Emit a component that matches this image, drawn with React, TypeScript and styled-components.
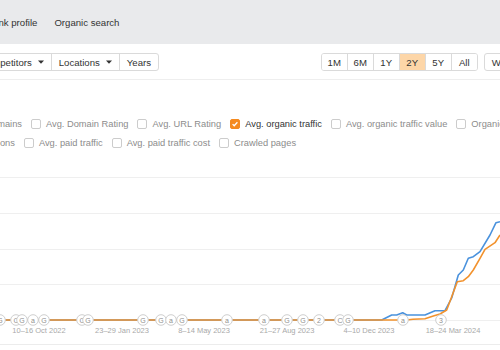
import React from 'react';
import styled, { createGlobalStyle } from 'styled-components';

const GlobalStyle = createGlobalStyle`
	body {
		margin: 0;
		background: #fff;
		font-family: 'Liberation Sans', Arial, sans-serif;
		overflow: hidden;
	}
`;

const options = [
	[
		{ label: 'Referring domains', checked: false },
		{ label: 'Avg. Domain Rating', checked: false },
		{ label: 'Avg. URL Rating', checked: false },
		{ label: 'Avg. organic traffic', checked: true },
		{ label: 'Avg. organic traffic value', checked: false },
		{ label: 'Organic pages', checked: false },
	],
	[
		{ label: 'Paid positions', checked: false },
		{ label: 'Avg. paid traffic', checked: false },
		{ label: 'Avg. paid traffic cost', checked: false },
		{ label: 'Crawled pages', checked: false },
	],
];

const ranges = ['1M', '6M', '1Y', '2Y', '5Y', 'All'];

const markers: [number, string][] = [
	[0, 'G'], [16, 'C'], [22, 'G'], [33, 'a'], [44, 'G'], [82, 'C'], [88, 'G'],
	[143, 'G'], [161, 'G'], [171, 'a'], [182, 'G'], [227, 'a'], [264, 'a'],
	[287, 'G'], [303, 'G'], [319, '2'], [340, 'C'], [348, 'G'], [403, 'a'], [441, '3'],
];

const axisLabels: [number, string][] = [
	[39, '10–16 Oct 2022'],
	[122, '23–29 Jan 2023'],
	[204, '8–14 May 2023'],
	[287, '21–27 Aug 2023'],
	[369, '4–10 Dec 2023'],
	[453, '18–24 Mar 2024'],
];

const blue = [
	[0, 160], [381.7, 160], [391.7, 155], [396.7, 155], [402.7, 152.7], [406.7, 155],
	[425, 155], [435, 150.7], [445, 150.7], [451.7, 138], [458.3, 115], [463.3, 110],
	[468.3, 98.3], [473.3, 96.7], [480, 91.7], [490, 75], [496, 62.7], [500, 61.7],
];

const orange = [
	[0, 160], [406.7, 160], [413, 159.3], [425, 158.7], [433.3, 156], [440, 154],
	[446.7, 150], [451.7, 136.7], [457.3, 121.7], [463.3, 120.7], [468.3, 116.7],
	[473.3, 110], [480, 98.3], [485, 89.3], [495, 82.7], [500, 75],
];

const toPoints = (pts: number[][]) => pts.map((p) => p.join(',')).join(' ');

function Caret() {
	return (
		<CaretIcon viewBox='0 0 6 4'>
			<path d='M0 0.5h6L3 3.7z' fill='#333' />
		</CaretIcon>
	);
}

function Chart() {
	return (
		<ChartSvg viewBox='0 0 500 190' width={500} height={190}>
			{[17, 53, 89, 124, 160].map((y) => (
				<line key={y} x1={0} x2={500} y1={y + 0.5} y2={y + 0.5} stroke='#efefef' />
			))}
			<line x1={0} x2={500} y1={184.5} y2={184.5} stroke='#ececec' />
			<polyline points={toPoints(blue)} fill='none' stroke='#4a92dd' strokeWidth={1.6} strokeLinejoin='round' />
			<polyline points={toPoints(orange)} fill='none' stroke='#f2922d' strokeWidth={1.6} strokeLinejoin='round' />
			{markers.map(([x, t], i) => (
				<g key={i}>
					<circle cx={x} cy={160} r={5.3} fill='#fff' stroke='#cfcfcf' />
					<text x={x} y={162.5} textAnchor='middle' fontSize={7} fill='#8f8f8f' fontFamily='Liberation Sans, Arial, sans-serif'>
						{t}
					</text>
				</g>
			))}
			{axisLabels.map(([x, t]) => (
				<text key={t} x={x} y={173} textAnchor='middle' fontSize={7.5} fill='#a9a9a9' fontFamily='Liberation Sans, Arial, sans-serif'>
					{t}
				</text>
			))}
		</ChartSvg>
	);
}

function App() {
	return (
		<Page>
			<GlobalStyle />
			<TopNav>
				<NavTab>Link profile</NavTab>
				<NavTab>Organic search</NavTab>
			</TopNav>
			<Toolbar>
				<ButtonGroup>
					<Button>
						Competitors <Caret />
					</Button>
					<Button>
						Locations <Caret />
					</Button>
					<Button>Years</Button>
				</ButtonGroup>
				<RangeGroup>
					{ranges.map((r) => (
						<RangeButton key={r} $active={r === '2Y'}>
							{r}
						</RangeButton>
					))}
				</RangeGroup>
				<ButtonGroup>
					<Button>
						Weekly <Caret />
					</Button>
				</ButtonGroup>
			</Toolbar>
			<Options>
				{options.map((row, i) => (
					<OptionRow key={i} $offset={i === 0 ? -69 : -58}>
						{row.map((o) => (
							<Option key={o.label}>
								<Box $checked={o.checked}>
									{o.checked && (
										<svg viewBox='0 0 10 10' width={8} height={8}>
											<path d='M2 5.2l2 2 4-4.4' fill='none' stroke='#fff' strokeWidth={1.6} />
										</svg>
									)}
								</Box>
								<OptionLabel $checked={o.checked}>{o.label}</OptionLabel>
							</Option>
						))}
					</OptionRow>
				))}
			</Options>
			<Chart />
		</Page>
	);
}

const Page = styled.div`
	width: 500px;
	height: 350px;
	overflow: hidden;
`;

const TopNav = styled.div`
	display: flex;
	align-items: center;
	gap: 17px;
	height: 44px;
	padding-top: 1px;
	box-sizing: border-box;
	margin-left: -9px;
	background: #e9eaec;
`;

const NavTab = styled.div`
	font-size: 9.6px;
	color: #333;
`;

const Toolbar = styled.div`
	display: flex;
	align-items: center;
	gap: 6px;
	margin: 9px -43px 0 -28px;
	padding-bottom: 8px;
	border-bottom: 1px solid #eeeeee;
`;

const ButtonGroup = styled.div`
	display: flex;
	height: 18px;
	box-sizing: border-box;
	border: 1px solid #dadada;
	border-radius: 3px;
	background: #fff;
`;

const Button = styled.div`
	display: flex;
	align-items: center;
	gap: 6px;
	padding: 0 7px;
	font-size: 9.6px;
	color: #333;
	& + & {
		border-left: 1px solid #dadada;
	}
`;

const CaretIcon = styled.svg`
	width: 6px;
	height: 4px;
`;

const RangeGroup = styled(ButtonGroup)`
	&& {
		margin-left: auto;
	}
	overflow: hidden;
`;

const RangeButton = styled.div<{ $active?: boolean }>`
	width: 25px;
	display: flex;
	align-items: center;
	justify-content: center;
	font-size: 9.6px;
	color: #333;
	background: ${(p) => (p.$active ? '#fdd6a8' : '#fff')};
	& + & {
		border-left: 1px solid #dadada;
	}
`;

const Options = styled.div`
	padding-top: 34px;
`;

const OptionRow = styled.div<{ $offset: number }>`
	display: flex;
	align-items: center;
	height: 19px;
	margin-left: ${(p) => p.$offset}px;
	white-space: nowrap;
`;

const Option = styled.div`
	display: flex;
	align-items: center;
	gap: 5px;
	margin-right: 9px;
`;

const Box = styled.span<{ $checked?: boolean }>`
	display: flex;
	align-items: center;
	justify-content: center;
	width: 10px;
	height: 10px;
	box-sizing: border-box;
	border-radius: 2px;
	border: 1px solid ${(p) => (p.$checked ? '#f58a1f' : '#cccccc')};
	background: ${(p) => (p.$checked ? '#f58a1f' : '#fff')};
`;

const OptionLabel = styled.span<{ $checked?: boolean }>`
	font-size: 9.3px;
	color: ${(p) => (p.$checked ? '#333' : '#8c8c8c')};
`;

const ChartSvg = styled.svg`
	display: block;
	margin-top: 8px;
`;

export default App;
